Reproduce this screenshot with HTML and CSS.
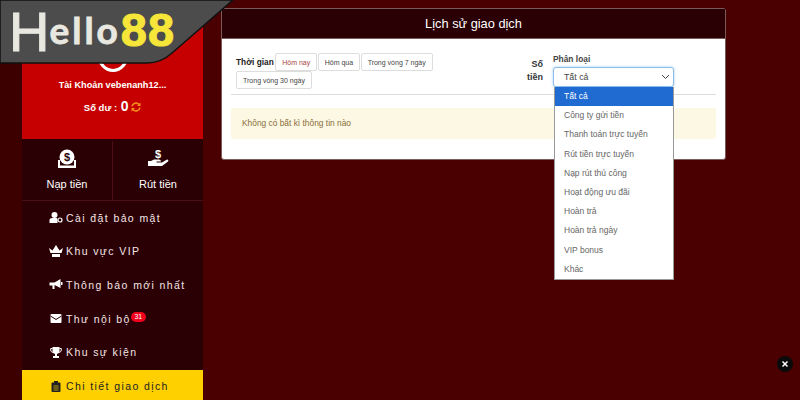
FILE: index.html
```html
<!DOCTYPE html>
<html lang="en">
<head>
  <meta charset="UTF-8" />
  <meta name="viewport" content="width=device-width, initial-scale=1" />
  <title>Lịch sử giao dịch</title>
  <link rel="stylesheet" href="styles.css">
</head>
<body>
  <div class="logo">
    <svg class="logo-bg" width="240" height="66" viewBox="0 0 240 66">
      <path d="M0 0H233L172 53Q161 63 147 63H0Z" fill="#4c4c4c" stroke="#111" stroke-width="1.5"/>
    </svg>
    <div class="logo-text"><span class="logo-h">H</span><span class="logo-ello">ello</span><span class="logo-num">88</span></div>
  </div>

  <div class="sidebar">
    <div class="account">
      <div class="avatar"></div>
      <p class="account-name">Tài Khoản vebenanh12...</p>
      <p class="balance">Số dư : <b>0</b>
        <svg class="refresh" width="10" height="10" viewBox="0 0 10 10"><path d="M1 4.500A4 4 0 0 1 8 2.500M9 5.500A4 4 0 0 1 2 7.500" fill="none" stroke="#f7931e" stroke-width="1.500"/><path d="M9.500 .5V4H6ZM.5 9.500V6H4Z" fill="#f7931e"/></svg>
      </p>
    </div>

    <div class="cash">
      <div class="cash-btn">
        <svg width="20" height="20" viewBox="0 0 20 20"><path d="M1 11H3V16.500H17V11H19V19H1Z" fill="#fff"/><circle cx="10" cy="8" r="7.500" fill="#fff"/><text x="10" y="12" font-size="11" font-weight="700" text-anchor="middle" fill="#2a0004" font-family="Liberation Sans">$</text></svg>
        <span>Nạp tiền</span>
      </div>
      <div class="cash-btn">
        <svg width="22" height="20" viewBox="0 0 22 20"><text x="11" y="9" font-size="11" font-weight="700" text-anchor="middle" fill="#fff" font-family="Liberation Sans">$</text><path d="M1 12H4L7 10.500H12Q14 10.500 14 12.500H9.500V13.500H15L20 10.500Q22 10.500 21 12.500L15 17H1Z" fill="#fff"/></svg>
        <span>Rút tiền</span>
      </div>
    </div>

    <ul class="menu">
      <li class="menu-item">
        <svg width="13" height="11" viewBox="0 0 13 11"><circle cx="5" cy="3" r="3" fill="#fff"/><path d="M0 11V8Q0 6 3 6H7Q8 6 8 8V11Z" fill="#fff"/><circle cx="10.500" cy="8" r="2" fill="none" stroke="#fff" stroke-width="1.200"/></svg>
        Cài đặt bảo mật
      </li>
      <li class="menu-item">
        <svg width="14" height="12" viewBox="0 0 14 12"><path d="M0 3L3.500 5.500L7 0L10.500 5.500L14 3L12.500 8H1.500Z" fill="#fff"/><rect x="3" y="9" width="8" height="3" fill="#fff"/></svg>
        Khu vực VIP
      </li>
      <li class="menu-item">
        <svg width="13" height="11" viewBox="0 0 13 11"><path d="M0 3.500H5L11 0V9L5 6V10H3V6.500H0Z" fill="#fff"/><rect x="11.500" y="3" width="1.500" height="3" fill="#fff"/></svg>
        Thông báo mới nhất
      </li>
      <li class="menu-item">
        <svg width="11" height="9" viewBox="0 0 11 9"><rect width="11" height="9" rx="1" fill="#fff"/><path d="M0 2L5.500 5.500L11 2" fill="none" stroke="#2a0004"/></svg>
        Thư nội bộ<span class="badge">31</span>
      </li>
      <li class="menu-item">
        <svg width="12" height="11" viewBox="0 0 12 11"><path d="M2.500 0H9.500V4Q9.500 6.500 7 7V9H9V11H3V9H5V7Q2.500 6.500 2.500 4Z" fill="#fff"/><path d="M2.500 1.500H.7V3Q.7 5 3 5.500M9.500 1.500H11.300V3Q11.300 5 9 5.500" fill="none" stroke="#fff"/></svg>
        Khu sự kiện
      </li>
      <li class="menu-item active">
        <svg width="9" height="11" viewBox="0 0 9 11"><rect y="1.500" width="9" height="9.500" rx="1" fill="#222"/><rect x="2.500" width="4" height="3" fill="#222"/><path d="M2 5H7M2 7H7M2 9H7" stroke="#ffd000" stroke-width=".7"/></svg>
        Chi tiết giao dịch
      </li>
    </ul>
  </div>

  <div class="panel">
    <div class="panel-head">Lịch sử giao dịch</div>
    <div class="panel-body">
      <div class="filters">
        <div class="time-group">
          <span class="filter-label">Thời gian</span>
          <button class="btn btn-on">Hôm nay</button>
          <button class="btn">Hôm qua</button>
          <button class="btn">Trong vòng 7 ngày</button>
          <button class="btn">Trong vòng 30 ngày</button>
        </div>
        <div class="amount-label">Số<br>tiền</div>
        <div class="type-group">
          <div class="type-label">Phân loại</div>
          <div class="select">
            Tất cả
            <svg width="9" height="6" viewBox="0 0 9 6"><path d="M1 1L4.500 4.500L8 1" fill="none" stroke="#444" stroke-width="1"/></svg>
          </div>
          <ul class="dropdown">
            <li class="selected">Tất cả</li>
            <li>Công ty gửi tiền</li>
            <li>Thanh toán trực tuyến</li>
            <li>Rút tiền trực tuyến</li>
            <li>Nạp rút thủ công</li>
            <li>Hoạt động ưu đãi</li>
            <li>Hoàn trả</li>
            <li>Hoàn trả ngày</li>
            <li>VIP bonus</li>
            <li>Khác</li>
          </ul>
        </div>
      </div>
      <div class="alert">Không có bất kì thông tin nào</div>
    </div>
  </div>

  <div class="close-btn">
    <svg width="8" height="8" viewBox="0 0 8 8"><path d="M1.500 1.500L6.500 6.500M6.500 1.500L1.500 6.500" stroke="#fff" stroke-width="1.500"/></svg>
  </div>
</body>
</html>
```

FILE: styles.css
```css
* { box-sizing: border-box; }
html, body { height: 400px; overflow: hidden; }
body { font-family: "Liberation Sans", Arial, sans-serif; margin: 0; background: #4a0000; display: flex; align-items: flex-start; }
ul { list-style: none; margin: 0; padding: 0; }

/* logo sits over the page */
.logo { position: absolute; left: 0; top: 0; width: 240px; height: 66px; z-index: 5; }
.logo-bg { display: block; }
.logo-text { position: absolute; left: 13px; top: 0; display: flex; align-items: flex-start; font-family: Lato, sans-serif; color: #e9e8e0; line-height: 1; white-space: nowrap; }
.logo-h { font-family: "Liberation Sans", sans-serif; font-size: 56px; margin: 4px 0 0 -4px; -webkit-text-stroke: 1px #e9e8e0; }
.logo-ello { font-size: 37px; font-weight: 700; margin: 11px 0 0 0; letter-spacing: 3px; -webkit-text-stroke: .8px #e9e8e0; }
.logo-num { font-family: "Liberation Sans", sans-serif; font-size: 47px; font-weight: 700; color: #f7e63a; margin: 6px 0 0 0; letter-spacing: 1px; -webkit-text-stroke: 1px #f7e63a; }

/* sidebar */
.sidebar { width: 181px; height: 400px; margin-left: 22px; flex: none; background: #2a0004; box-shadow: -22px 0 0 #3d0000; }
.account { height: 139px; background: #c60000; color: #fff; text-align: center; padding-top: 36px; }
.avatar { width: 32px; height: 36px; margin: 0 auto; border: 3px solid #fff; border-radius: 50%; }
.account-name { margin: 7px 0 0; font-size: 9.200px; font-weight: 700; line-height: 12px; }
.balance { margin: 7px 0 0; font-size: 9.500px; font-weight: 700; line-height: 16px; }
.balance b { font-size: 14px; margin-left: 1px; }
.refresh { vertical-align: -1px; }

.cash { display: flex; height: 60px; margin-top: 2px; border-bottom: 1px solid #4a1015; }
.cash-btn { flex: 1; display: flex; flex-direction: column; align-items: center; padding-top: 8px; color: #fff; font-size: 11px; }
.cash-btn + .cash-btn { border-left: 1px solid #4a1015; }
.cash-btn svg { height: 20px; }
.cash-btn span { margin-top: 8px; line-height: 14px; }

.menu-item { height: 33.600px; display: flex; align-items: center; padding-left: 27px; color: #f4e6e6; font-size: 10.500px; letter-spacing: 1.400px; }
.menu-item svg { flex: none; width: 14px; margin-right: 3px; }
.menu-item.active { background: #ffd000; color: #222; height: 33px; margin-top: 1px; }
.badge { margin-top: -4px; width: 15px; height: 10px; border-radius: 5px; background: #f0001c; color: #fff; font-size: 7px; line-height: 10px; text-align: center; letter-spacing: 0; }

/* main panel */
.panel { width: 505px; margin: 8px 0 0 18px; border: 1px solid #7d5a5a; border-radius: 3px; background: #fff; }
.panel-head { height: 30px; background: #2a0004; color: #fff; font-size: 12.800px; line-height: 29px; text-align: center; border-bottom: 1px solid #7d5a5a; }
.panel-body { height: 120px; padding: 14px 9px 0; }
.filters { display: flex; height: 42px; border-bottom: 1px solid #ddd; margin-bottom: 13px; }
.time-group { width: 279px; padding: 0 75px 0 5px; display: flex; flex-wrap: wrap; align-items: flex-start; align-content: flex-start; }
.filter-label { font-size: 8.300px; font-weight: 700; color: #222; line-height: 18px; margin-right: 1.500px; }
.btn { height: 18px; padding: 0 6px; margin-right: .5px; border: 1px solid #ddd; border-radius: 2px; background: #fff; color: #444; font-family: inherit; font-size: 7px; line-height: 15px; }
.btn-on { color: #a94442; }
.amount-label { width: 33px; padding-top: 5px; font-size: 9px; font-weight: 700; color: #333; line-height: 13px; text-align: right; }
.type-group { position: relative; margin-left: 10px; width: 121px; }
.type-label { font-size: 8.400px; font-weight: 700; color: #444; line-height: 13px; }
.select { height: 20px; margin-top: 1px; display: flex; align-items: center; justify-content: space-between; padding: 0 3px 0 10px; border: 1px solid #8dbdea; border-radius: 3px; box-shadow: 0 0 3px rgba(102,175,233,.6); font-size: 8.800px; color: #444; background: #fff; }
.dropdown { position: absolute; left: 1px; top: 34px; width: 120px; background: #fff; border: 1px solid #999; border-top: 0; z-index: 3; }
.dropdown li { height: 19.200px; padding-left: 9px; font-size: 8.500px; line-height: 19px; color: #666; }
.dropdown li.selected { background: #1f6bd1; color: #fff; }
.alert { height: 31px; padding-left: 11px; background: #fcf8e3; border-radius: 3px; color: #8a6d3b; font-size: 8.400px; line-height: 30px; }

.close-btn { position: absolute; left: 777px; top: 356px; width: 16px; height: 16px; border-radius: 50%; background: #0a0a0a; display: flex; align-items: center; justify-content: center; }
```
